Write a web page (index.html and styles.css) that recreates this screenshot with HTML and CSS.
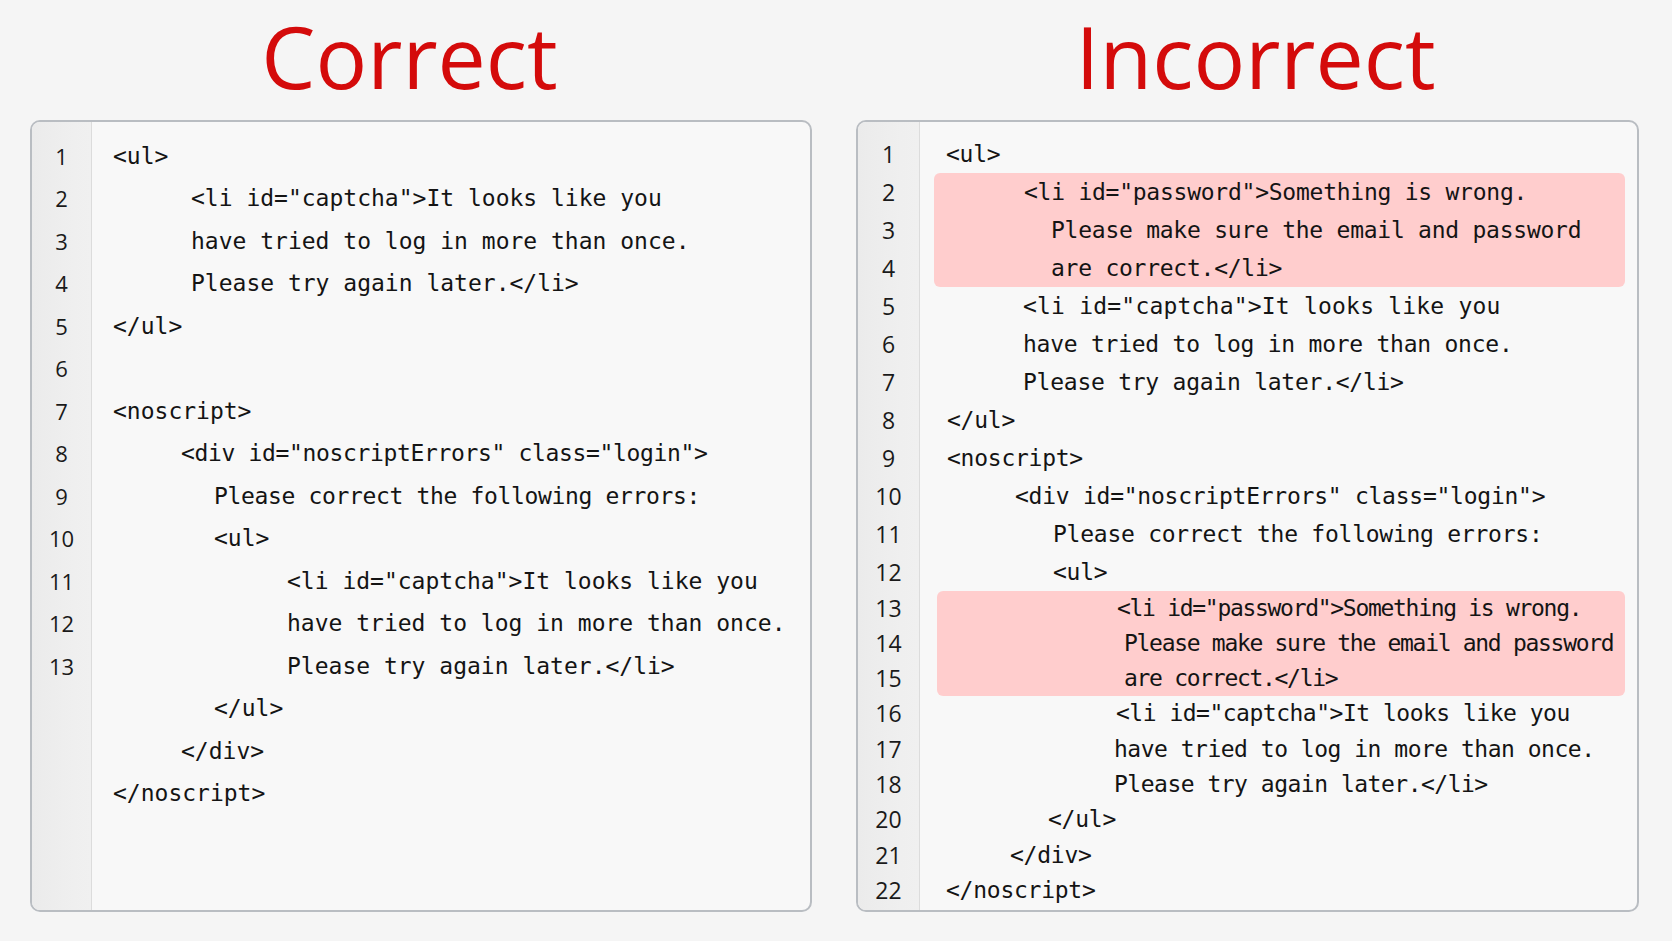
FILE: index.html
```html
<!DOCTYPE html>
<html lang="en">
<head>
<meta charset="utf-8">
<title>Correct vs Incorrect</title>
<link rel="stylesheet" href="styles.css">
</head>
<body>
<main class="page">
  <section class="col">
    <h1 class="title title-a">Correct</h1>
    <div class="panel panel-a">
      <div class="gutter">
        <div class="row">1</div>
        <div class="row">2</div>
        <div class="row">3</div>
        <div class="row">4</div>
        <div class="row">5</div>
        <div class="row">6</div>
        <div class="row">7</div>
        <div class="row">8</div>
        <div class="row">9</div>
        <div class="row">10</div>
        <div class="row">11</div>
        <div class="row">12</div>
        <div class="row">13</div>
      </div>
      <div class="code">
        <div class="row p21">&lt;ul&gt;</div>
        <div class="row p99">&lt;li id="captcha"&gt;It looks like you</div>
        <div class="row p99">have tried to log in more than once.</div>
        <div class="row p99">Please try again later.&lt;/li&gt;</div>
        <div class="row p21">&lt;/ul&gt;</div>
        <div class="row p21"> </div>
        <div class="row p21">&lt;noscript&gt;</div>
        <div class="row p89 tighter">&lt;div id="noscriptErrors" class="login"&gt;</div>
        <div class="row p122 tighter">Please correct the following errors:</div>
        <div class="row p122">&lt;ul&gt;</div>
        <div class="row p195">&lt;li id="captcha"&gt;It looks like you</div>
        <div class="row p195">have tried to log in more than once.</div>
        <div class="row p195">Please try again later.&lt;/li&gt;</div>
        <div class="row p122">&lt;/ul&gt;</div>
        <div class="row p89">&lt;/div&gt;</div>
        <div class="row p21">&lt;/noscript&gt;</div>
      </div>
    </div>
  </section>

  <section class="col">
    <h1 class="title title-b">Incorrect</h1>
    <div class="panel panel-b">
      <div class="gutter">
        <div class="row">1</div>
        <div class="row">2</div>
        <div class="row">3</div>
        <div class="row">4</div>
        <div class="row">5</div>
        <div class="row">6</div>
        <div class="row">7</div>
        <div class="row">8</div>
        <div class="row">9</div>
        <div class="row">10</div>
        <div class="row">11</div>
        <div class="row">12</div>
        <div class="row tight">13</div>
        <div class="row tight">14</div>
        <div class="row tight">15</div>
        <div class="row tight">16</div>
        <div class="row tight">17</div>
        <div class="row tight">18</div>
        <div class="row tight">20</div>
        <div class="row tight">21</div>
        <div class="row tight">22</div>
      </div>
      <div class="code">
        <div class="row p26">&lt;ul&gt;</div>
        <div class="hl">
          <div class="row p90">&lt;li id="password"&gt;Something is wrong.</div>
          <div class="row p117">Please make sure the email and password</div>
          <div class="row p117">are correct.&lt;/li&gt;</div>
        </div>
        <div class="row p103 wide">&lt;li id="captcha"&gt;It looks like you</div>
        <div class="row p103">have tried to log in more than once.</div>
        <div class="row p103">Please try again later.&lt;/li&gt;</div>
        <div class="row p27">&lt;/ul&gt;</div>
        <div class="row p27">&lt;noscript&gt;</div>
        <div class="row p95">&lt;div id="noscriptErrors" class="login"&gt;</div>
        <div class="row p133">Please correct the following errors:</div>
        <div class="row p133">&lt;ul&gt;</div>
        <div class="hl hl-b">
          <div class="row tight cond p180">&lt;li id="password"&gt;Something is wrong.</div>
          <div class="row tight cond p187">Please make sure the email and password</div>
          <div class="row tight cond p187">are correct.&lt;/li&gt;</div>
        </div>
        <div class="row tight semi p196">&lt;li id="captcha"&gt;It looks like you</div>
        <div class="row tight semi p194">have tried to log in more than once.</div>
        <div class="row tight semi p194">Please try again later.&lt;/li&gt;</div>
        <div class="row tight p128">&lt;/ul&gt;</div>
        <div class="row tight p90">&lt;/div&gt;</div>
        <div class="row tight p26">&lt;/noscript&gt;</div>
      </div>
    </div>
  </section>
</main>
</body>
</html>
```

FILE: styles.css
```css
* { box-sizing: border-box; }

html, body {
  margin: 0;
  padding: 0;
}

body {
  background: #f5f5f5;
  width: 1672px;
  height: 941px;
  overflow: hidden;
}

.page {
  display: grid;
  grid-template-columns: 782px 783px;
  column-gap: 44px;
  padding: 12px 0 29px 30px;
  height: 941px;
}

.col {
  display: flex;
  flex-direction: column;
  min-height: 0;
}

.title {
  margin: 0 0 21px;
  font-family: "Open Sans", sans-serif;
  font-weight: 400;
  font-size: 86px;
  line-height: 87px;
  color: #d40b0b;
  text-align: center;
}

.title-a { padding-right: 23px; }
.title-b { padding-left: 16px; }

.panel {
  flex: 1;
  display: flex;
  border: 2px solid #b9bdc2;
  border-radius: 10px;
  background: #f8f8f8;
  overflow: hidden;
}

.gutter {
  flex: none;
  width: 60px;
  padding-top: 12.5px;
  background: linear-gradient(to right, #ebebeb, #efefef 70%, #f0f0f0);
  border-right: 1px solid #dcdcdc;
  font-family: "Open Sans", sans-serif;
  font-size: 22px;
  color: #1a1a1a;
  text-align: center;
}

.panel-b .gutter {
  width: 62px;
  font-size: 23px;
}

.code {
  flex: 1;
  min-width: 0;
  padding-top: 12.5px;
  font-family: "DejaVu Sans Mono", monospace;
  font-size: 23px;
  color: #141414;
}

.row {
  white-space: pre;
}

.panel-a .row {
  height: 42.5px;
  line-height: 42.5px;
}

.panel-a .code .tighter { letter-spacing: -0.35px; }

.panel-b .row {
  height: 38px;
  line-height: 38px;
}

.panel-b .row.tight {
  height: 35.3px;
  line-height: 35.3px;
}

.panel-b .code { letter-spacing: -0.25px; }
.panel-b .code .wide { letter-spacing: 0.2px; }
.panel-b .code .cond { letter-spacing: -1.3px; }
.panel-b .code .semi { letter-spacing: -0.5px; }

.hl {
  background: #ffcdcd;
  border-radius: 6px;
  margin: 0 12px 0 14px;
}

.hl-b { margin-left: 17px; }

.p21 { padding-left: 21px; }
.p26 { padding-left: 26px; }
.p27 { padding-left: 27px; }
.p89 { padding-left: 89px; }
.p90 { padding-left: 90px; }
.p95 { padding-left: 95px; }
.p99 { padding-left: 99px; }
.p103 { padding-left: 103px; }
.p117 { padding-left: 117px; }
.p122 { padding-left: 122px; }
.p128 { padding-left: 128px; }
.p133 { padding-left: 133px; }
.p180 { padding-left: 180px; }
.p187 { padding-left: 187px; }
.p194 { padding-left: 194px; }
.p195 { padding-left: 195px; }
.p196 { padding-left: 196px; }
```
